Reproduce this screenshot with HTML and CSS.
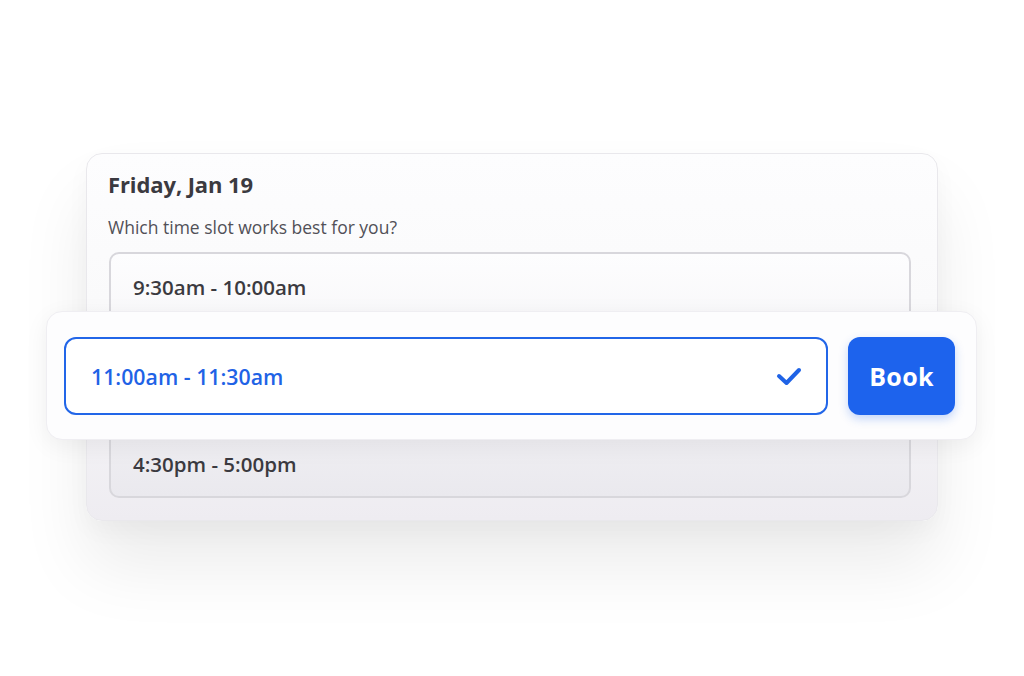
FILE: index.html
```html
<!doctype html>
<html>
	<head>
		<title>Book a time</title>
		<link rel="stylesheet" href="styles.css">
	</head>
	<body>
		<div class="stage">
			<div class="card">
				<h1 class="day">Friday, Jan 19</h1>
				<p class="prompt">Which time slot works best for you?</p>
				<div class="slots">
					<div class="slot slot-first">9:30am - 10:00am</div>
					<div class="slot slot-hidden">11:00am - 11:30am</div>
					<div class="slot slot-last">4:30pm - 5:00pm</div>
				</div>

				<!-- lifted row, sits over the list -->
				<div class="picker">
					<div class="picked">
						<span>11:00am - 11:30am</span>
						<svg class="tick" width="28" height="24" viewBox="0 0 28 24">
							<path d="M4 12 L11.5 19 L24 6" fill="none" stroke="currentColor" stroke-width="4" stroke-linecap="round" stroke-linejoin="round"/>
						</svg>
					</div>
					<button class="book">Book</button>
				</div>
			</div>
		</div>
	</body>
</html>
```

FILE: styles.css
```css
html, body {
	padding: 0;
	margin: 0;
}
body {
	background: #fff;
	font-family: "Open Sans", "Noto Sans", sans-serif;
	color: #3b3a40;
	width: 1024px;
	height: 676px;
	overflow: hidden;
}
.stage {
	padding: 153px 0 0 86px;
}
.card {
	position: relative;
	box-sizing: border-box;
	width: 852px;
	height: 368px;
	padding: 15px 26px 0 21px;
	border: 1px solid #e9e8ec;
	border-radius: 16px;
	background: linear-gradient(#fdfdfe 0%, #fafafb 40%, #eeecf1 100%);
	box-shadow: 0 45px 70px rgba(0, 0, 0, .08), 0 10px 25px rgba(0, 0, 0, .03);
}
.day {
	margin: 0;
	font-size: 22px;
	font-weight: 700;
	line-height: 30px;
	letter-spacing: -0.1px;
}
.prompt {
	margin: 16px 0 13px;
	font-size: 17.5px;
	line-height: 24px;
	color: #515057;
}
.slots {
	box-sizing: border-box;
	height: 246px;
	margin-left: 1px;
	border: 2px solid #d8d7dc;
	border-radius: 10px;
	background: linear-gradient(#fdfdfe 0%, #f4f3f6 55%, #eae9ee 100%);
	display: flex;
	flex-direction: column;
}
.slot {
	display: flex;
	align-items: center;
	padding-left: 22px;
	font-size: 20.5px;
	font-weight: 600;
	color: #3b3a40;
}
.slot-first {
	height: 66px;
}
.slot-last {
	height: 64px;
}
.slot-hidden {
	flex: 1;
	visibility: hidden;
}
.picker {
	position: absolute;
	left: -41px;
	top: 157px;
	box-sizing: border-box;
	width: 931px;
	height: 129px;
	padding: 25px 21px 0 17px;
	display: flex;
	gap: 20px;
	align-items: flex-start;
	background: #fdfdfe;
	border: 1px solid #efeef2;
	border-radius: 16px;
	box-shadow: 0 6px 24px rgba(0, 0, 0, .06);
}
.picked {
	box-sizing: border-box;
	flex: 1;
	height: 78px;
	display: flex;
	align-items: center;
	justify-content: space-between;
	padding: 0 23px 0 25px;
	border: 2.5px solid #2266e8;
	border-radius: 12px;
	background: #fff;
	color: #1f63e6;
	font-size: 21.3px;
	font-weight: 600;
}
.tick {
	display: block;
	color: #1f63e6;
}
.book {
	width: 107px;
	height: 78px;
	border: 0;
	border-radius: 12px;
	background: #1d63ed;
	color: #fff;
	font-family: inherit;
	font-size: 25px;
	font-weight: 700;
	letter-spacing: 0.3px;
	box-shadow: 0 4px 10px rgba(29, 99, 237, .25);
}
```
